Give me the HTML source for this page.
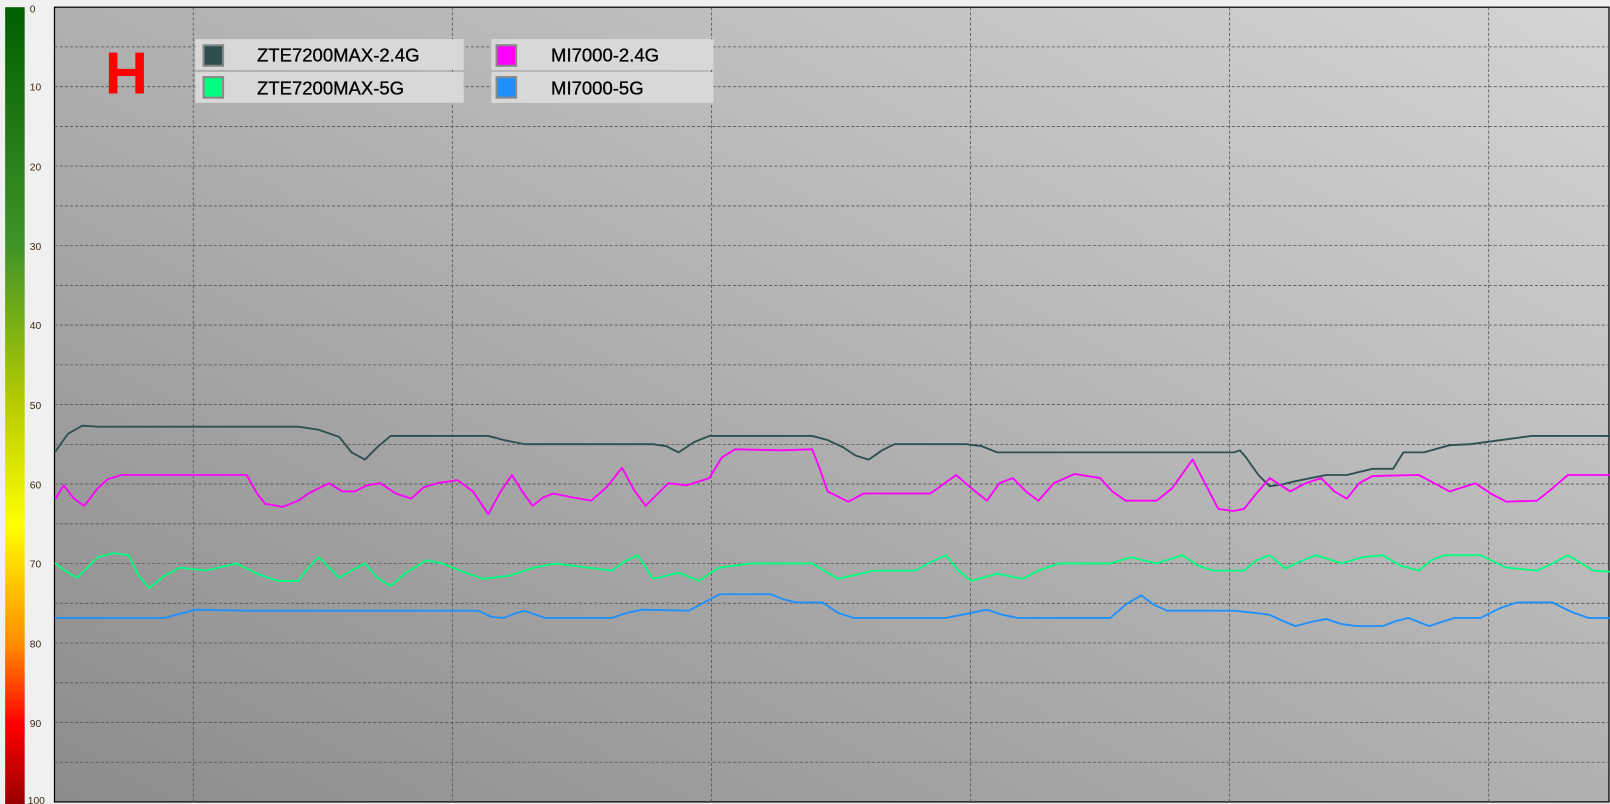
<!DOCTYPE html>
<html><head><style>html,body{margin:0;padding:0;background:#f0f0f0;overflow:hidden}svg{display:block}</style></head>
<body>
<svg width="1610" height="804" viewBox="0 0 1566 782" preserveAspectRatio="none" xmlns="http://www.w3.org/2000/svg" font-family="Liberation Sans, Arial, sans-serif">
<defs>
<linearGradient id="bg" x1="0" y1="1" x2="1" y2="0">
<stop offset="0" stop-color="#8c8c8c"/><stop offset="1" stop-color="#d4d4d4"/>
</linearGradient>
<linearGradient id="cb" x1="0" y1="0" x2="0" y2="1">
<stop offset="0" stop-color="#005f00"/><stop offset="0.3" stop-color="#3f9428"/>
<stop offset="0.5" stop-color="#b8cc00"/><stop offset="0.65" stop-color="#ffff00"/>
<stop offset="0.8" stop-color="#ff8c00"/><stop offset="0.9" stop-color="#ff0000"/>
<stop offset="1" stop-color="#9a0000"/>
</linearGradient>
</defs>
<rect x="5" y="7" width="19" height="775" fill="url(#cb)"/>
<g font-size="10" fill="#3a2a10">
<text x="29" y="12">0</text><text x="29" y="88">10</text><text x="29" y="166">20</text><text x="29" y="243">30</text><text x="29" y="320">40</text><text x="29" y="398">50</text><text x="29" y="475">60</text><text x="29" y="552">70</text><text x="29" y="630">80</text><text x="29" y="707">90</text><text x="27" y="782">100</text>
</g>
<rect x="53" y="7" width="1512" height="773" fill="url(#bg)" stroke="#000" stroke-width="1.2"/>
<g stroke="#555" stroke-width="0.8" stroke-dasharray="3,2" fill="none">
<path d="M53 45.6H1565M53 84.3H1565M53 123H1565M53 161.6H1565M53 200.3H1565M53 238.9H1565M53 277.6H1565M53 316.2H1565M53 354.9H1565M53 393.5H1565M53 432.2H1565M53 470.8H1565M53 509.5H1565M53 548.1H1565M53 586.8H1565M53 625.4H1565M53 664.1H1565M53 702.7H1565M53 741.4H1565"/>
<path d="M188 7V780M440 7V780M692 7V780M944 7V780M1196 7V780M1448 7V780"/>
</g>
<text x="102" y="91" font-size="58" font-weight="bold" fill="#ff0000">H</text>
<g>
<rect x="190" y="38" width="261" height="30" fill="#d8d8d8"/><rect x="190" y="70" width="261" height="30" fill="#d8d8d8"/>
<rect x="478" y="38" width="216" height="30" fill="#d8d8d8"/><rect x="478" y="70" width="216" height="30" fill="#d8d8d8"/>
<rect x="198" y="44" width="19" height="20" fill="#2f4f4f" stroke="#888" stroke-width="2"/>
<rect x="198" y="75" width="19" height="20" fill="#00ff7f" stroke="#888" stroke-width="2"/>
<rect x="483" y="44" width="19" height="20" fill="#ff00ff" stroke="#888" stroke-width="2"/>
<rect x="483" y="75" width="19" height="20" fill="#1e90ff" stroke="#888" stroke-width="2"/>
<g font-size="18" fill="#000" stroke="#000" stroke-width="0.3">
<text x="250" y="60">ZTE7200MAX-2.4G</text><text x="250" y="92">ZTE7200MAX-5G</text>
<text x="536" y="60">MI7000-2.4G</text><text x="536" y="92">MI7000-5G</text>
</g>
</g>
<g fill="none" stroke-width="1.8" stroke-linejoin="round" stroke-linecap="round">
<polyline stroke="#2f4f4f" points="54,439 66,422 80,414 95,415 290,415 310,418 330,425 342,440 355,447 368,434 380,424 395,424 475,424 490,428 510,432 635,432 648,434 660,440 675,430 690,424 790,424 805,428 820,435 832,443 845,447 858,438 870,432 940,432 955,434 970,440 1200,440 1206,438 1212,445 1224,462 1235,473 1248,471 1260,468 1290,462 1310,462 1335,456 1355,456 1365,440 1385,440 1410,433 1430,432 1460,428 1490,424 1566,424"/>
<polyline stroke="#ff00ff" points="54,485 62,472 72,485 82,492 95,475 105,466 118,462 230,462 240,462 250,480 258,490 275,493 290,487 300,480 320,470 333,478 345,478 357,472 370,470 385,480 400,485 412,474 425,470 445,467 460,478 475,500 487,478 498,462 508,478 518,492 528,484 538,480 558,484 575,487 590,474 605,455 617,477 628,492 640,480 650,470 668,472 690,465 702,445 715,437 760,438 790,437 797,455 805,478 825,488 840,480 880,480 905,480 930,462 945,475 960,487 972,470 985,465 998,478 1010,487 1025,470 1045,461 1070,465 1082,478 1095,487 1125,487 1140,475 1160,447 1172,470 1185,495 1200,497 1210,495 1222,480 1235,465 1255,478 1270,470 1285,465 1298,478 1310,485 1322,470 1335,463 1380,462 1395,470 1410,478 1435,470 1450,480 1465,488 1495,487 1510,475 1525,462 1566,462"/>
<polyline stroke="#00ff7f" points="54,548 63,555 75,562 85,552 95,542 110,538 125,540 135,560 145,572 160,560 175,552 200,555 230,548 250,558 270,565 290,565 300,552 310,542 320,552 330,562 342,555 355,548 367,562 380,570 395,557 415,545 430,548 450,556 470,563 495,560 520,552 540,548 595,555 608,546 620,540 628,552 635,563 660,557 680,565 690,558 700,552 730,548 790,548 815,563 850,555 890,555 905,547 920,540 932,555 945,565 970,558 995,563 1010,555 1030,548 1080,548 1100,542 1125,548 1150,540 1165,550 1180,555 1210,555 1222,545 1235,540 1250,553 1265,546 1280,540 1305,548 1325,542 1345,540 1362,550 1380,555 1392,545 1405,540 1440,540 1465,552 1495,555 1510,548 1525,540 1550,555 1566,556"/>
<polyline stroke="#1e90ff" points="54,601 160,601 175,597 190,593 240,594 465,594 478,600 490,601 500,597 510,594 530,601 595,601 610,596 625,593 670,594 685,586 700,578 750,578 762,583 775,586 800,586 815,596 830,601 920,601 940,597 960,593 975,598 990,601 1080,601 1095,588 1110,579 1122,588 1135,594 1200,594 1220,596 1235,598 1248,604 1260,609 1275,605 1290,602 1305,607 1320,609 1345,609 1358,604 1370,601 1390,609 1402,605 1415,601 1440,601 1458,592 1475,586 1510,586 1528,595 1545,601 1566,601"/>
</g>
</svg>
</body></html>
